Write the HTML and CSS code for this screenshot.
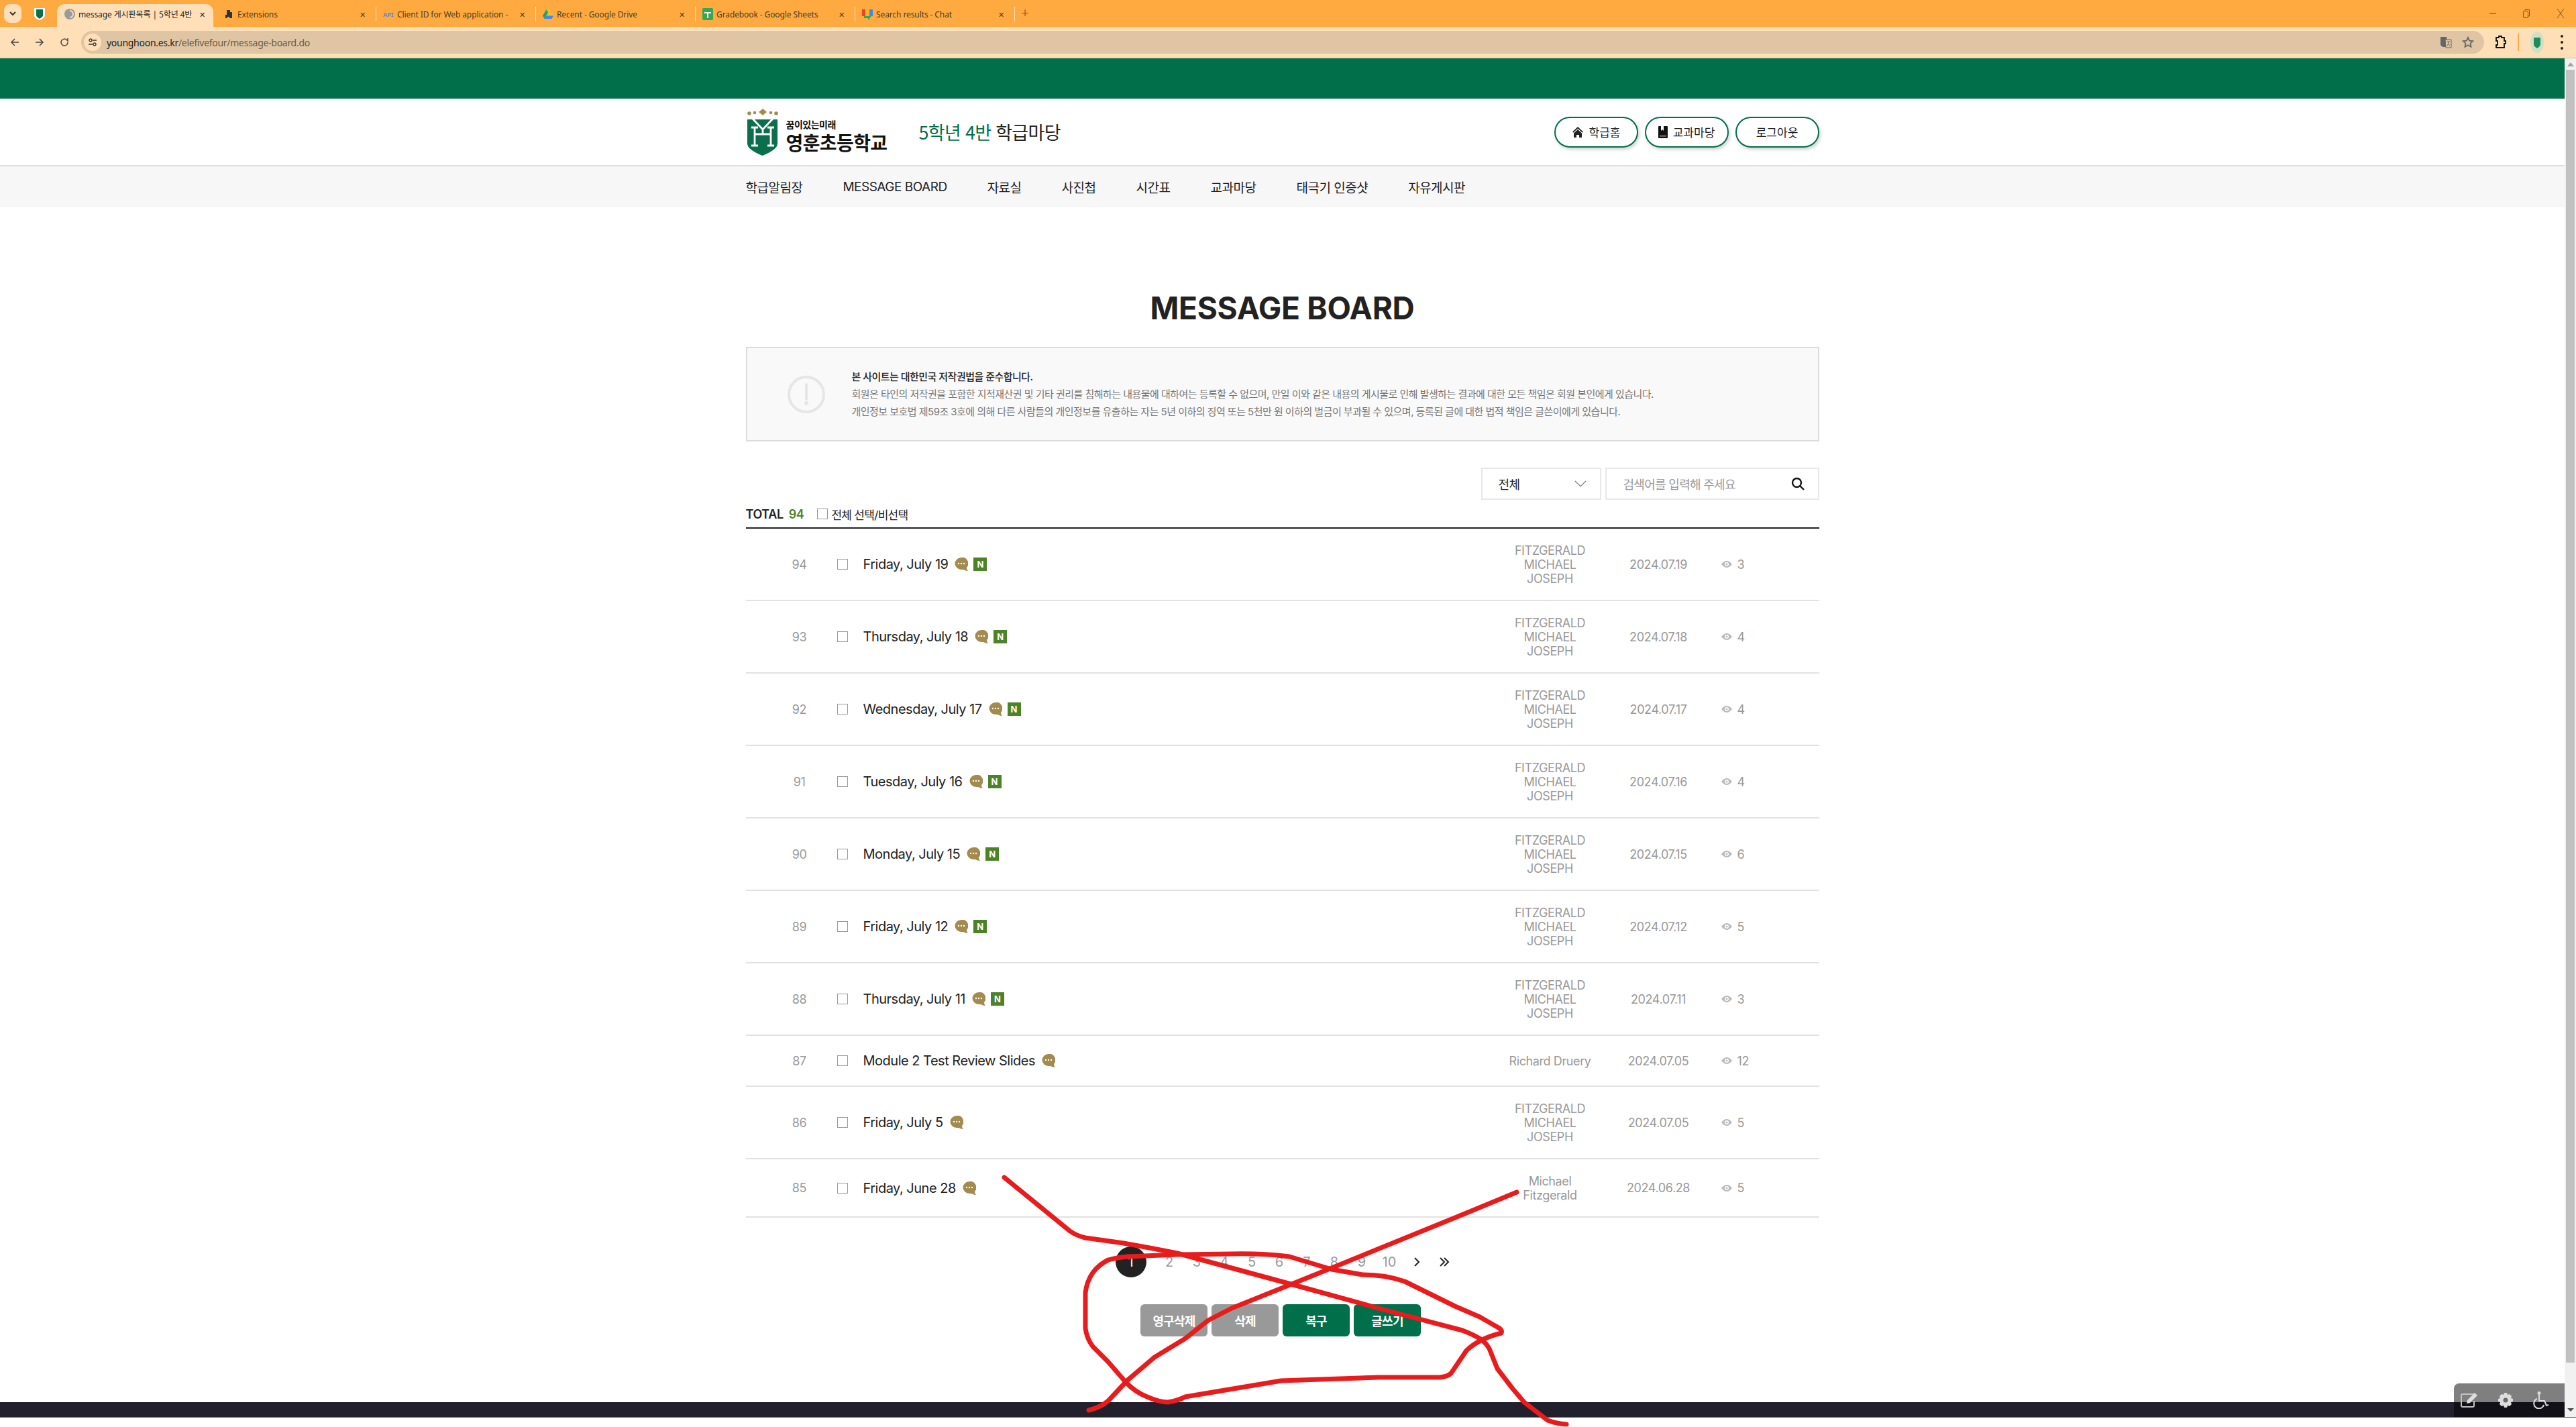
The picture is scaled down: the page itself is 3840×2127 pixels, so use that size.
FILE: index.html
```html
<!DOCTYPE html>
<html lang="ko">
<head>
<meta charset="utf-8">
<title>message 게시판목록</title>
<link rel="stylesheet" href="styles.css">
</head>
<body>
<div class="browser">
  <div class="tabstrip">
    <div class="tab-search"><svg width="10" height="8" viewBox="0 0 10 8"><path d="M1 2l4 4 4-4" fill="none" stroke="#333" stroke-width="2"/></svg></div>
    <div class="pinned"><svg width="16" height="18" viewBox="0 0 16 18"><path d="M0 0h16v11q0 4-8 7-8-3-8-7z" fill="#fff"/><path d="M3 2h10v9q0 2-5 5-5-3-5-5z" fill="#0a6f4a"/></svg></div>
    <div class="tab active">
      <svg class="favicon" width="16" height="16" viewBox="0 0 16 16"><circle cx="8" cy="8" r="8" fill="#9a9a9a"/><path d="M8 3a5 5 0 0 1 0 10" fill="none" stroke="#ffdfb8" stroke-width="2"/></svg>
      <span class="tab-title">message 게시판목록 | 5학년 4반</span><span class="tab-x">✕</span>
    </div>
    <div class="tab">
      <svg class="favicon" width="16" height="16" viewBox="0 0 16 16"><path d="M5 2h5v3h3v9H9v-2H6v2H3V9h2z" fill="#333"/></svg>
      <span class="tab-title">Extensions</span><span class="tab-x">✕</span>
    </div>
    <div class="tab sep">
      <span class="favicon api">API</span>
      <span class="tab-title">Client ID for Web application -</span><span class="tab-x">✕</span>
    </div>
    <div class="tab sep">
      <svg class="favicon" width="16" height="16" viewBox="0 0 16 16"><path d="M5.500 1h5L16 10.500h-5z" fill="#f5bd2a"/><path d="M5.500 1L0 10.500 2.500 15 8 5.500z" fill="#1fa463"/><path d="M2.500 15h11L16 10.500H5z" fill="#4285f4"/></svg>
      <span class="tab-title">Recent - Google Drive</span><span class="tab-x">✕</span>
    </div>
    <div class="tab sep">
      <svg class="favicon" width="16" height="18" viewBox="0 0 16 18"><rect width="16" height="18" rx="2" fill="#34a853"/><path d="M3 7h10M8 7v8" stroke="#fff" stroke-width="2"/></svg>
      <span class="tab-title">Gradebook - Google Sheets</span><span class="tab-x">✕</span>
    </div>
    <div class="tab sep">
      <svg class="favicon" width="16" height="18" viewBox="0 0 16 18"><path d="M0 2h5v10H0z" fill="#ea4335"/><path d="M5 2h6v5H5z" fill="#fbbc04"/><path d="M11 2h5v10h-5z" fill="#4285f4"/><path d="M3 12h11l-5 6v-3H3z" fill="#34a853"/></svg>
      <span class="tab-title">Search results - Chat</span><span class="tab-x">✕</span>
    </div>
    <div class="new-tab sep">+</div>
    <div class="winctl">
      <svg width="12" height="12" viewBox="0 0 12 12"><path d="M1 6h10" stroke="#7a5a2a" stroke-width="1.200"/></svg>
      <svg width="12" height="14" viewBox="0 0 12 14"><rect x="1.500" y="3.500" width="7" height="10" rx="1.500" fill="none" stroke="#7a5a2a"/><path d="M4 3V1.500h6.500V11H9" fill="none" stroke="#7a5a2a"/></svg>
      <svg width="14" height="16" viewBox="0 0 14 16"><path d="M2 1l10 14M12 1L2 15" stroke="#7a5a2a"/></svg>
    </div>
  </div>
  <div class="toolbar">
    <svg class="nav-ic" width="14" height="14" viewBox="0 0 14 14"><path d="M13 7H2M7 2L2 7l5 5" fill="none" stroke="#444" stroke-width="1.500"/></svg>
    <svg class="nav-ic" width="14" height="14" viewBox="0 0 14 14"><path d="M1 7h11M7 2l5 5-5 5" fill="none" stroke="#444" stroke-width="1.500"/></svg>
    <svg class="nav-ic" width="14" height="14" viewBox="0 0 14 14"><path d="M12 7a5 5 0 1 1-1.500-3.500L12 5V1" fill="none" stroke="#444" stroke-width="1.500"/></svg>
    <div class="omnibox">
      <span class="site-ic"><svg width="12" height="12" viewBox="0 0 12 12"><circle cx="3" cy="3" r="2" fill="none" stroke="#333" stroke-width="1.300"/><circle cx="9" cy="9" r="2" fill="none" stroke="#333" stroke-width="1.300"/><path d="M6 3h6M0 9h6" stroke="#333" stroke-width="1.300"/></svg></span>
      <span class="url"><b>younghoon.es.kr</b>/elefivefour/message-board.do</span>
      <svg class="om-right" width="18" height="18" viewBox="0 0 18 18"><path d="M1 1h9l2 15H4L1 13z" fill="#666"/><path d="M8 5h9v12H9z" fill="#dfc5a3" stroke="#666"/><path d="M11 8h4M13 8c0 3-1 5-2 6M12 11l3 3" stroke="#666" fill="none"/></svg>
      <svg class="om-right" width="18" height="18" viewBox="0 0 18 18"><path d="M9 2l2.200 4.700 5 .6-3.700 3.400 1 5L9 13.200 4.500 15.700l1-5L1.800 7.300l5-.6z" fill="none" stroke="#666" stroke-width="1.800"/></svg>
    </div>
    <svg class="puzzle" width="16" height="20" viewBox="0 0 16 20"><path d="M1 3h4V1h4v2h4v5h2v4h-2v6H1v-4h2V8H1z" fill="none" stroke="#111" stroke-width="1.800"/></svg>
    <span class="tool-sep"></span>
    <svg class="avatar" width="20" height="32" viewBox="0 0 20 32"><ellipse cx="10" cy="16" rx="10" ry="16" fill="#cfe0c4"/><path d="M5 9h10v10q0 3-5 6-5-3-5-6z" fill="#1f8a5a"/></svg>
    <svg class="menu-dots" width="4" height="24" viewBox="0 0 4 24"><circle cx="2" cy="3" r="2" fill="#222"/><circle cx="2" cy="12" r="2" fill="#222"/><circle cx="2" cy="21" r="2" fill="#222"/></svg>
  </div>
  <div class="viewport">
    <div class="page">
      <div class="topbar"></div>
      <header class="site-header">
        <div class="wrap header-row">
          <a class="logo">
            <svg class="shield" width="48" height="72" viewBox="0 0 48 72">
              <g fill="#a38a4f"><path d="M24 1l6 5-6 5-6-5z"/><circle cx="4" cy="8" r="2.800"/><circle cx="12" cy="7" r="2.300"/><circle cx="36" cy="7" r="2.300"/><circle cx="44" cy="8" r="2.800"/></g>
              <path d="M1 17h45v36q0 9-22.500 18Q1 62 1 53z" fill="#0a6f4a"/>
              <path d="M9 16l15 16 15-16M24 32v8M12 29v27M36 29v27M7 29h10M31 29h10M7 56h10M31 56h10M12 39h24" fill="none" stroke="#fff" stroke-width="2.800"/>
            </svg>
            <span class="logo-text"><span class="logo-small">꿈이있는미래</span><span class="logo-big">영훈초등학교</span></span>
          </a>
          <div class="class-title"><em>5학년 4반</em> 학급마당</div>
          <div class="head-btns">
            <a class="pill"><svg width="18" height="18" viewBox="0 0 18 18"><path d="M9 1l8 7.500-1.200 1.200L9 3.500 2.200 9.700 1 8.500z" fill="#222"/><path d="M9 5l6 5.500V17h-4v-4H7v4H3v-6.500z" fill="#222"/></svg>학급홈</a>
            <a class="pill"><svg width="14" height="18" viewBox="0 0 14 18"><path d="M1 0h3v7l2-2 2 2V0h5a1 1 0 0 1 1 1v16a1 1 0 0 1-1 1H1a1 1 0 0 1-1-1V1a1 1 0 0 1 1-1z" fill="#111"/><path d="M2 14h10v1.500H2z" fill="#999"/></svg>교과마당</a>
            <a class="pill">로그아웃</a>
          </div>
        </div>
      </header>
      <nav class="site-nav">
        <div class="wrap nav-row">
          <a>학급알림장</a><a>MESSAGE BOARD</a><a>자료실</a><a>사진첩</a><a>시간표</a><a>교과마당</a><a>태극기 인증샷</a><a>자유게시판</a>
        </div>
      </nav>
      <main class="wrap">
        <h1 class="page-title">MESSAGE BOARD</h1>
        <section class="notice">
          <svg class="notice-ic" width="56" height="56" viewBox="0 0 56 56"><circle cx="28" cy="28" r="26" fill="none" stroke="#e6e6e6" stroke-width="4"/><path d="M28 13v22" stroke="#e6e6e6" stroke-width="4" stroke-linecap="round"/><circle cx="28" cy="41" r="3" fill="#e6e6e6"/></svg>
          <div class="notice-text">
            <p class="notice-head">본 사이트는 대한민국 저작권법을 준수합니다.</p>
            <p>회원은 타인의 저작권을 포함한 지적재산권 및 기타 권리를 침해하는 내용물에 대하여는 등록할 수 없으며, 만일 이와 같은 내용의 게시물로 인해 발생하는 결과에 대한 모든 책임은 회원 본인에게 있습니다.</p>
            <p>개인정보 보호법 제59조 3호에 의해 다른 사람들의 개인정보를 유출하는 자는 5년 이하의 징역 또는 5천만 원 이하의 벌금이 부과될 수 있으며, 등록된 글에 대한 법적 책임은 글쓴이에게 있습니다.</p>
          </div>
        </section>
        <div class="search-row">
          <div class="select">전체<svg width="18" height="10" viewBox="0 0 18 10"><path d="M1 1l8 8 8-8" fill="none" stroke="#777" stroke-width="1.200"/></svg></div>
          <div class="search"><span>검색어를 입력해 주세요</span><svg width="20" height="20" viewBox="0 0 20 20"><circle cx="8.500" cy="8.500" r="6.500" fill="none" stroke="#111" stroke-width="2.400"/><path d="M13 13l6 6" stroke="#111" stroke-width="2.400"/></svg></div>
        </div>
        <div class="total-row">
          <b>TOTAL</b><b class="total-num">94</b><span class="check small"></span><span class="all">전체 선택/비선택</span>
        </div>
        <div class="board" id="board"></div>
        <div class="pager">
          <a class="on">1</a><a class="first-after">2</a><a>3</a><a>4</a><a>5</a><a>6</a><a>7</a><a>8</a><a>9</a><a>10</a>
          <a class="arrow"><svg width="10" height="16" viewBox="0 0 10 16"><path d="M2 2l6 6-6 6" fill="none" stroke="#222" stroke-width="2"/></svg></a>
          <a class="arrow"><svg width="16" height="16" viewBox="0 0 16 16"><path d="M2 2l6 6-6 6M8 2l6 6-6 6" fill="none" stroke="#222" stroke-width="2"/></svg></a>
        </div>
        <div class="actions">
          <a class="btn gray">영구삭제</a><a class="btn gray">삭제</a><a class="btn green">복구</a><a class="btn green">글쓰기</a>
        </div>
      </main>
      <footer class="site-footer"></footer>
      <div class="quickbar">
        <svg width="26" height="24" viewBox="0 0 26 24"><path d="M20 3H3a2 2 0 0 0-2 2v15a2 2 0 0 0 2 2h15a2 2 0 0 0 2-2v-7" fill="none" stroke="#c4c4c4" stroke-width="2"/><path d="M9 17l1-5L21 1l4 4L14 16z" fill="#ddd"/></svg>
        <i></i>
        <svg width="22" height="22" viewBox="0 0 22 22"><path d="M9 0h4l1 3 3-1 3 3-1 3 3 1v4l-3 1 1 3-3 3-3-1-1 3H9l-1-3-3 1-3-3 1-3-3-1V9l3-1-1-3 3-3 3 1z" fill="#ddd"/><circle cx="11" cy="11" r="3.500" fill="#6a6a6a"/></svg>
        <i></i>
        <svg width="24" height="26" viewBox="0 0 24 26"><circle cx="9" cy="2.500" r="2.500" fill="#ddd"/><path d="M9 5v9h8l3 7 3-1" fill="none" stroke="#ddd" stroke-width="2"/><path d="M6 11a7.500 7.500 0 1 0 10 9" fill="none" stroke="#ddd" stroke-width="2"/></svg>
        <svg class="qb-arrow" width="6" height="10" viewBox="0 0 6 10"><path d="M1 1l4 4-4 4" fill="none" stroke="#ddd" stroke-width="1.500"/></svg>
      </div>
    </div>
    <div class="scrollbar"><span class="sb-up"></span><span class="sb-thumb"></span><span class="sb-down"></span></div>
  </div>
  <div class="below"></div>
  <svg class="scribble" width="3840" height="2127" viewBox="0 0 3840 2127">
    <path d="M1497 1755L1595 1835Q1605 1842 1618 1845L1675 1853Q1715 1860 1755 1868L1928 1915 2066 1953 2180 1983Q2198 1990 2209 1997 2216 2003 2220 2010L2232 2040 2255 2070 2272 2090 2307 2117Q2320 2122 2335 2123"/>
    <path d="M2261 1777L2169 1815 1985 1890 1928 1913 1836 1950 1801 1968 1767 1995 1721 2023 1681 2057 1652 2088Q1640 2098 1623 2102"/>
    <path d="M1755 1870L1681 1873Q1662 1875 1652 1878 1638 1885 1629 1897 1620 1910 1618 1927V1980Q1620 1995 1629 2007L1652 2030 1678 2060Q1692 2075 1710 2082 1728 2090 1741 2090 1755 2088 1767 2082L1910 2058 2054 2053H2146Q2158 2052 2163 2047L2186 2013Q2205 1995 2238 1987 2240 1982 2232 1978L2206 1963 2169 1947 2094 1910Q2065 1900 2031 1900L1985 1892 1922 1873Q1880 1868 1836 1869Z"/>
  </svg>
</div>
<script src="board.js"></script>
</body>
</html>
```
FILE: board.js
```js
var F = ["FITZGERALD", "MICHAEL", "JOSEPH"];
var rows = [
  [94, "Friday, July 19", F, "2024.07.19", 3, 1],
  [93, "Thursday, July 18", F, "2024.07.18", 4, 1],
  [92, "Wednesday, July 17", F, "2024.07.17", 4, 1],
  [91, "Tuesday, July 16", F, "2024.07.16", 4, 1],
  [90, "Monday, July 15", F, "2024.07.15", 6, 1],
  [89, "Friday, July 12", F, "2024.07.12", 5, 1],
  [88, "Thursday, July 11", F, "2024.07.11", 3, 1],
  [87, "Module 2 Test Review Slides", ["Richard Druery"], "2024.07.05", 12, 0],
  [86, "Friday, July 5", F, "2024.07.05", 5, 0],
  [85, "Friday, June 28", ["Michael", "Fitzgerald"], "2024.06.28", 5, 0]
];
var bubble = '<svg class="bubble" width="20" height="20" viewBox="0 0 20 20"><path d="M10 0a9.500 9 0 0 0 0 18h3q3 2 7 2-2-2-2-5a9 9 0 0 0-8-15z" fill="#a38a4f"/><g fill="#fff"><circle cx="6" cy="9" r="1.200"/><circle cx="10" cy="9" r="1.200"/><circle cx="14" cy="9" r="1.200"/></g></svg>';
var eye = '<svg class="eye" width="16" height="12" viewBox="0 0 16 12"><path d="M0 6q8-10 16 0-8 10-16 0z" fill="#bbb"/><circle cx="8" cy="6" r="3" fill="#fff"/><circle cx="8" cy="6" r="1.500" fill="#bbb"/></svg>';
document.getElementById("board").innerHTML = rows.map(function (r) {
  var cls = r[2].length === 3 ? "row tall" : (r[2].length === 2 ? "row mid" : "row short");
  return '<div class="' + cls + '">' +
    '<span class="num">' + r[0] + '</span>' +
    '<span class="check"></span>' +
    '<span class="subject"><span>' + r[1] + '</span>' + bubble + (r[5] ? '<b class="new">N</b>' : '') + '</span>' +
    '<span class="author">' + r[2].join("<br>") + '</span>' +
    '<span class="date">' + r[3] + '</span>' +
    '<span class="views">' + eye + r[4] + '</span>' +
    '</div>';
}).join("");
```
FILE: styles.css
```css
* { box-sizing: border-box; }
html, body { margin: 0; padding: 0; background: #fff; }
body { font-family: Inter, "Noto Sans CJK KR", sans-serif; color: #222; overflow: hidden; }
p, h1 { margin: 0; }
a { color: inherit; text-decoration: none; }

.browser { position: relative; width: 3840px; height: 2127px; display: flex; flex-direction: column; }

/* browser chrome */
.tabstrip { height: 40px; background: #ffaa41; display: flex; align-items: flex-end; padding-left: 6px; font: 12px "Noto Sans", "Noto Sans CJK KR", sans-serif; color: #4a3a20; }
.tab-search { width: 26px; height: 28px; margin-bottom: 6px; background: #ffdfb8; border-radius: 9px; display: flex; align-items: center; justify-content: center; }
.pinned { width: 53px; height: 34px; padding-bottom: 4px; display: flex; align-items: center; justify-content: center; }
.tab { width: 238px; height: 34px; display: flex; align-items: center; padding: 0 15px 4px 11px; position: relative; }
.tab.active { width: 233px; padding-right: 12px; background: #ffdfb8; border-radius: 12px 12px 0 0; color: #222; margin-right: 4px; }
.tab.sep::before, .new-tab.sep::before { content: ""; position: absolute; left: 0; top: 4px; height: 22px; width: 1px; background: #ffe3c0; }
.favicon { flex: none; margin-right: 5px; }
.api { width: 16px; font: bold 9px "Noto Sans", sans-serif; color: #5b7fd6; }
.tab-title { flex: 1; white-space: nowrap; overflow: hidden; letter-spacing: -.1px; }
.tab-x { flex: none; font-size: 11px; margin-left: 4px; }
.new-tab { position: relative; width: 32px; height: 34px; line-height: 26px; text-align: center; font-size: 20px; color: #8a6a30; }
.winctl { margin-left: auto; height: 40px; width: 138px; display: flex; align-items: center; justify-content: space-between; padding-right: 16px; padding-left: 8px; }

.toolbar { height: 47px; background: #ffdfb8; border-bottom: 1px solid #d2bfa0; display: flex; align-items: center; padding: 0 19px 0 15px; }
.nav-ic { flex: none; margin-right: 23px; }
.omnibox { flex: 1; height: 34px; margin-left: -5px; background: #dfc5a3; border-radius: 17px; display: flex; align-items: center; padding: 0 15px 0 4px; }
.site-ic { width: 26px; height: 26px; border-radius: 50%; background: #ffdfb8; display: flex; align-items: center; justify-content: center; margin-right: 8px; }
.url { flex: 1; font: 14px "Noto Sans", sans-serif; color: #6b5a44; letter-spacing: -.28px; }
.url b { font-weight: 400; color: #222; }
.om-right { flex: none; margin-left: 15px; }
.puzzle { flex: none; margin-left: 17px; }
.tool-sep { width: 2px; height: 26px; background: #ffaa41; margin: 0 17px; }
.avatar { flex: none; margin-right: 25px; }
.menu-dots { flex: none; }

/* viewport */
.viewport { display: flex; height: 2025px; }
.page { position: relative; flex: 1; min-width: 0; height: 2025px; display: flex; flex-direction: column; overflow: hidden; }
.wrap { width: 1600px; margin: 0 auto; }
.topbar { height: 60px; background: #006f4a; flex: none; }

.site-header { height: 101px; border-bottom: 2px solid #dedede; flex: none; }
.header-row { height: 99px; display: flex; align-items: center; }
.logo { display: flex; align-items: flex-start; width: 258px; }
.shield { display: block; margin: 0 11px 0 1px; }
.logo-text { display: flex; flex-direction: column; padding-top: 16px; font-family: "Noto Sans CJK KR", sans-serif; color: #111; }
.logo-small { font-size: 14px; line-height: 16px; font-weight: 700; letter-spacing: -.5px; }
.logo-big { font-size: 28px; line-height: 38px; font-weight: 700; letter-spacing: -.6px; white-space: nowrap; }
.class-title { font: 400 27px "Noto Sans CJK KR", sans-serif; letter-spacing: -.7px; color: #222; }
.class-title em { font-style: normal; color: #006f4a; }
.head-btns { margin-left: auto; display: flex; gap: 10px; }
.pill { width: 125px; height: 46px; display: flex; align-items: center; justify-content: center; gap: 8px; border: 2px solid #006f4a; border-radius: 23px; background: #fff; box-shadow: 2px 3px 5px rgba(0,0,0,.18); font: 400 17px "Noto Sans CJK KR", sans-serif; color: #222; }

.site-nav { height: 61px; background: #f7f7f7; flex: none; }
.nav-row { height: 61px; display: flex; align-items: center; gap: 60px; font: 400 19px Inter, "Noto Sans CJK KR", sans-serif; letter-spacing: -.5px; color: #222; }

.page-title { margin-top: 120px; height: 60px; text-align: center; font: 700 46px/60px Inter, sans-serif; letter-spacing: -.3px; color: #222; }

.notice { margin-top: 28px; height: 141px; background: #f9f9f9; border: 2px solid #dcdcdc; display: flex; align-items: center; padding-left: 60px; }
.notice-ic { flex: none; margin-right: 40px; }
.notice-text { font-size: 15px; line-height: 26px; color: #777; letter-spacing: -.53px; }
.notice-head { color: #222; font-weight: 500; }

.search-row { margin-top: 39px; display: flex; justify-content: flex-end; gap: 6px; }
.select { width: 179px; height: 48px; border: 2px solid #e8e8e8; display: flex; align-items: center; justify-content: space-between; padding: 0 20px 0 24px; font-size: 18px; letter-spacing: -.5px; color: #222; }
.search { width: 319px; height: 48px; border: 2px solid #e8e8e8; display: flex; align-items: center; justify-content: space-between; padding: 0 20px 0 25px; font-size: 18px; letter-spacing: -.7px; color: #999; }

.total-row { margin-top: 10px; height: 31px; padding-bottom: 9px; display: flex; align-items: center; font-size: 18px; letter-spacing: -.4px; color: #222; }
.total-row b { font-weight: 600; }
.total-row .total-num { color: #4c8228; margin-left: 8px; margin-right: 20px; }
.all { font-size: 17px; margin-left: 5px; letter-spacing: -.7px; }
.board { border-top: 2px solid #222; }
.row { display: flex; align-items: center; border-bottom: 2px solid #e2e2e2; font-size: 18px; letter-spacing: -.4px; color: #999; }
.row.tall { height: 108px; }
.row.mid { height: 87px; }
.row.short { height: 76px; }
.num { width: 136px; padding-left: 24px; text-align: center; flex: none; }
.check { width: 16px; height: 16px; background: #fff; border: 1px solid #999; flex: none; }
.check.small { width: 16px; height: 16px; }
.subject { flex: none; width: 975px; padding-left: 23px; display: flex; align-items: center; color: #222; font-size: 20px; letter-spacing: -.5px; }
.bubble { margin-left: 10px; flex: none; }
.new { width: 20px; height: 20px; margin-left: 8px; background: #4c8228; color: #fff; font: 700 13px/20px Inter, sans-serif; text-align: center; letter-spacing: 0; }
.author { width: 170px; margin-left: -13px; flex: none; text-align: center; line-height: 21px; }
.date { width: 145px; flex: none; text-align: center; margin-left: 4px; }
.views { display: flex; align-items: center; gap: 8px; flex: none; margin-left: 21px; }
.eye { flex: none; }

.pager { margin-top: 43px; height: 46px; display: flex; align-items: center; padding-left: 551px; font-size: 20px; color: #999; }
.pager a { width: 41px; height: 46px; line-height: 46px; text-align: center; flex: none; }
.pager .on { width: 46px; border-radius: 50%; background: #222; color: #fff; margin-right: 14px; }
.pager .arrow { display: flex; align-items: center; justify-content: center; }
.actions { margin-top: 40px; display: flex; justify-content: center; gap: 6px; padding-right: 5px; }
.btn { width: 100px; height: 48px; border-radius: 6px; color: #fff; display: flex; align-items: center; justify-content: center; font-size: 18px; font-weight: 700; letter-spacing: -.8px; }
.gray { background: #999; }
.green { background: #006f4a; }

.site-footer { margin-top: auto; height: 22px; background: #22202d; flex: none; }

/* floating quick bar over the page */
.quickbar { position: absolute; right: 0; bottom: 0; width: 165px; height: 50px; background: rgba(0,0,0,.5); border-radius: 8px 0 0 0; display: flex; align-items: center; padding-left: 10px; }
.quickbar i { width: 1px; height: 22px; background: rgba(255,255,255,.3); margin: 0 16px 0 14px; }
.quickbar svg { flex: none; }
.qb-arrow { margin-left: 26px; }

.scrollbar { width: 17px; flex: none; background: #f1f1f1; display: flex; flex-direction: column; align-items: center; }
.sb-up { margin-top: 6px; border: 5px solid transparent; border-top: 0; border-bottom: 6px solid #a3a3a3; }
.sb-thumb { width: 13px; height: 1927px; margin-top: 5px; background: #c1c1c1; }
.sb-down { margin-top: 68px; border: 5px solid transparent; border-bottom: 0; border-top: 5px solid #505050; }
.below { height: 15px; background: #fff; border-top: 1px solid #5a5868; }

.scribble { position: absolute; left: 0; top: 0; pointer-events: none; }
.scribble path { fill: none; stroke: #e81c1c; stroke-width: 7; stroke-linecap: round; stroke-linejoin: round; }
```
